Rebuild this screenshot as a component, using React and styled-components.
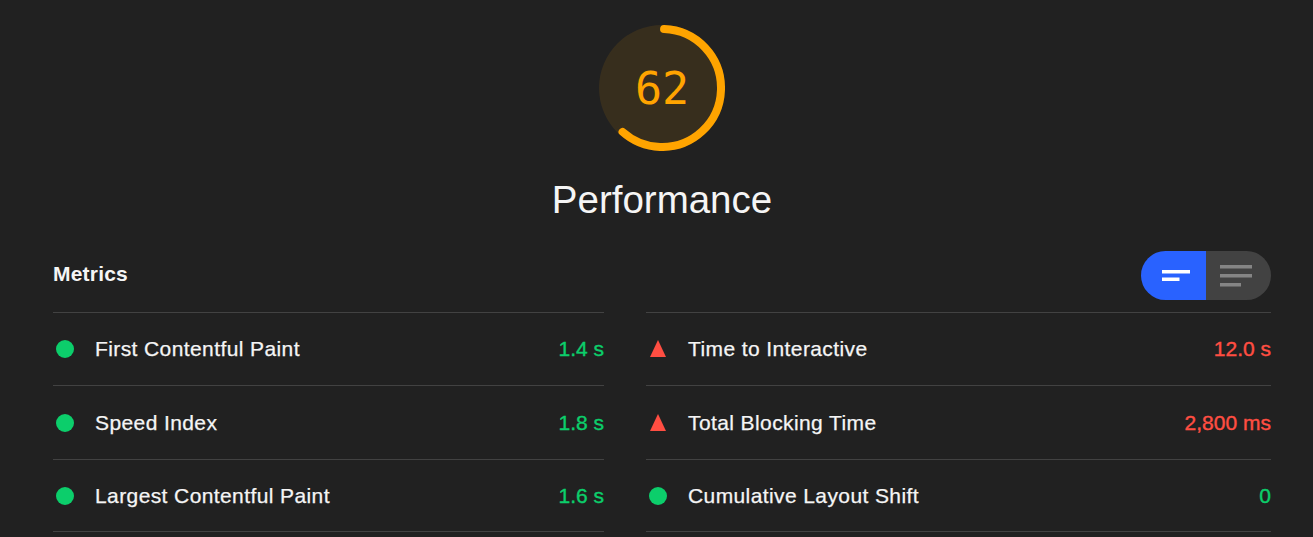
import React from "react";
import styled, { createGlobalStyle } from "styled-components";

const Global = createGlobalStyle`
  html, body { margin: 0; padding: 0; background: #212121; height: 100%; overflow: hidden; }
  body { font-family: "Liberation Sans", Arial, sans-serif; color: #f5f5f5; }
`;

const Page = styled.div`
  height: 537px;
  box-sizing: border-box;
  padding: 25px 42px 0 53px;
  overflow: hidden;
`;

const Header = styled.header`
  display: flex;
  flex-direction: column;
  align-items: center;
`;

const Gauge = styled.div`
  position: relative;
  width: 126px;
  height: 126px;
`;

const GaugeSvg = styled.svg`
  display: block;
  width: 126px;
  height: 126px;
`;

const Score = styled.div`
  position: absolute;
  inset: 0;
  display: flex;
  align-items: center;
  justify-content: center;
  font-family: "DejaVu Sans Mono", monospace;
  font-size: 45px;
  color: #ffa400;
`;

const Title = styled.h1`
  margin: 27px 0 0;
  font-size: 38.5px;
  line-height: 44px;
  font-weight: 400;
  color: #f5f5f5;
`;

const Toolbar = styled.div`
  display: flex;
  align-items: center;
  justify-content: space-between;
  margin-top: 29px;
  height: 49px;
`;

const Heading = styled.h2`
  margin: 0 0 4px;
  font-size: 21px;
  letter-spacing: 0.2px;
  font-weight: 700;
  color: #f5f5f5;
`;

const Toggle = styled.div`
  display: flex;
  width: 130px;
  height: 49px;
  border-radius: 25px;
  overflow: hidden;
`;

const ToggleBtn = styled.button`
  flex: 1;
  border: 0;
  padding: ${(p) => (p.$active ? "0 0 0 5px" : "0 5px 0 0")};
  display: flex;
  align-items: center;
  justify-content: center;
  background: ${(p) => (p.$active ? "#2962ff" : "#424242")};
`;

const Columns = styled.div`
  display: grid;
  grid-template-columns: 551px 625px;
  column-gap: 42px;
  margin-top: 12px;
`;

const Column = styled.div`
  border-top: 1px solid #424242;
`;

const Row = styled.div`
  display: grid;
  grid-template-columns: 42px 1fr auto;
  align-items: center;
  box-sizing: border-box;
  height: ${(p) => p.$h + 1}px;
  border-bottom: 1px solid #424242;
  font-size: 21px;
  letter-spacing: 0.4px;
  -webkit-text-stroke: 0.25px currentColor;
`;

const Label = styled.span`
  color: #f5f5f5;
`;

const Value = styled.span`
  color: ${(p) => (p.$bad ? "#ff4e42" : "#0cce6b")};
  letter-spacing: 0;
  -webkit-text-stroke: 0.4px currentColor;
`;

const Dot = styled.span`
  display: block;
  width: 18px;
  height: 18px;
  margin-left: 3px;
  border-radius: 50%;
  background: #0cce6b;
`;

const Triangle = styled.span`
  display: block;
  width: 0;
  height: 0;
  margin-left: 4px;
  margin-top: -1px;
  border-left: 8.5px solid transparent;
  border-right: 8.5px solid transparent;
  border-bottom: 17px solid #ff4e42;
`;

const left = [
  { label: "First Contentful Paint", value: "1.4 s", h: 72 },
  { label: "Speed Index", value: "1.8 s", h: 73 },
  { label: "Largest Contentful Paint", value: "1.6 s", h: 71 },
];
const right = [
  { label: "Time to Interactive", value: "12.0 s", bad: true, h: 72 },
  { label: "Total Blocking Time", value: "2,800 ms", bad: true, h: 73 },
  { label: "Cumulative Layout Shift", value: "0", h: 71 },
];

const Metric = ({ m }) => (
  <Row $h={m.h}>
    {m.bad ? <Triangle /> : <Dot />}
    <Label>{m.label}</Label>
    <Value $bad={m.bad}>{m.value}</Value>
  </Row>
);

export default function App() {
  const r = 59;
  const c = 2 * Math.PI * r;
  return (
    <Page>
      <Global />
      <Header>
        <Gauge>
          <GaugeSvg viewBox="0 0 126 126">
            <circle cx="63" cy="63" r="63" fill="#ffa400" fillOpacity="0.1" />
            <circle
              cx="63"
              cy="63"
              r={r}
              fill="none"
              stroke="#ffa400"
              strokeWidth="8"
              strokeLinecap="round"
              strokeDasharray={`${c * 0.61} ${c}`}
              transform="rotate(-88 63 63)"
            />
          </GaugeSvg>
          <Score>62</Score>
        </Gauge>
        <Title>Performance</Title>
      </Header>
      <Toolbar>
        <Heading>Metrics</Heading>
        <Toggle>
          <ToggleBtn $active>
            <svg width="28" height="11" viewBox="0 0 28 11">
              <rect x="0" y="0" width="28" height="3.5" fill="#fff" />
              <rect x="0" y="7.5" width="17.5" height="3.5" fill="#fff" />
            </svg>
          </ToggleBtn>
          <ToggleBtn>
            <svg width="32" height="22" viewBox="0 0 32 22">
              <rect x="0" y="0" width="32" height="3.5" fill="#858585" />
              <rect x="0" y="9" width="32" height="3.5" fill="#858585" />
              <rect x="0" y="18" width="21" height="3.5" fill="#858585" />
            </svg>
          </ToggleBtn>
        </Toggle>
      </Toolbar>
      <Columns>
        <Column>{left.map((m) => <Metric key={m.label} m={m} />)}</Column>
        <Column>{right.map((m) => <Metric key={m.label} m={m} />)}</Column>
      </Columns>
    </Page>
  );
}
